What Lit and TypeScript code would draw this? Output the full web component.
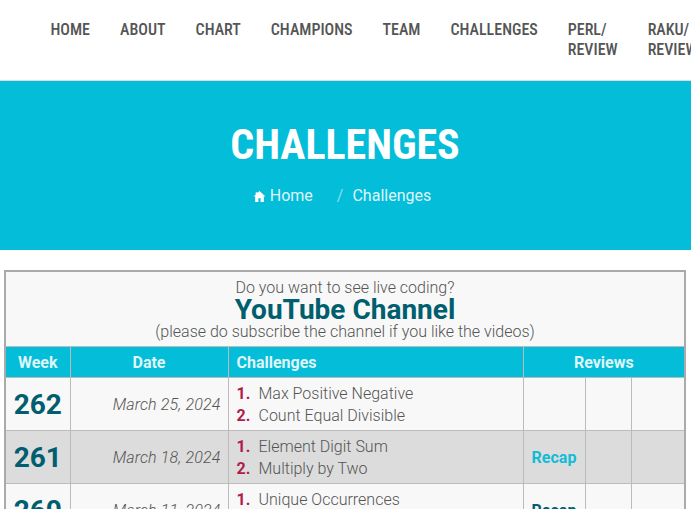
import { LitElement, html, css } from "lit";
import { customElement } from "lit/decorators.js";

const rows = [
  { week: "262", date: "March 25, 2024", a: "Max Positive Negative", b: "Count Equal Divisible", recap: "", alt: false },
  { week: "261", date: "March 18, 2024", a: "Element Digit Sum", b: "Multiply by Two", recap: "Recap", alt: true },
  { week: "260", date: "March 11, 2024", a: "Unique Occurrences", b: "Dictionary Rank", recap: "Recap", alt: false },
];

@customElement("app-root")
export class AppRoot extends LitElement {
  static styles = css`
    :host { display: block; width: 691px; height: 509px; overflow: hidden; font-family: Roboto, sans-serif; background: #fff; color: #555; }
    .nav { display: flex; gap: 30px; padding: 20px 0 0 50.5px; height: 60px; width: 800px; box-sizing: content-box; }
    .nav a { font-size: 16px; line-height: 20px; font-weight: 500; color: #555; font-stretch: 87%; }
    .hero { border-top: 1px solid #ddd; height: 169px; background: #04bdd8; color: #fff; display: flex; flex-direction: column; align-items: center; }
    h1 { margin: 42px 0 0 -1px; font-size: 42px; line-height: 44px; font-weight: 700; font-stretch: 87%; }
    .crumbs { display: flex; align-items: center; margin-top: 17px; padding-right: 7px; font-size: 16px; font-weight: 400; line-height: 24px; color: #dff6fa; }
    .crumbs svg { width: 13px; height: 13px; margin-right: 4px; color: #fff; }
    .sep { margin: 0 9px 0 24px; opacity: .6; }
    .wrap { padding: 20px 5px 0 4px; }
    table { border-collapse: collapse; width: 682px; table-layout: fixed; border: 2px solid #aaa; background: #f8f8f8; }
    td, th { border: 1px solid #bbb; padding: 0; }
    .promo { text-align: center; font-size: 16px; line-height: 16px; color: #555; font-weight: 300; height: 72px; padding-top: 2px; }
    .promo b { display: block; font-size: 28px; line-height: 28px; color: #005e6e; font-weight: 700; }
    .promo span { display: block; }
    .head th { background: #04bdd8; color: #def5f9; font-size: 16px; font-weight: 700; height: 30px; }
    .head .left { text-align: left; padding-left: 8px; }
    .row td { height: 52px; }
    .row .ch { height: 50px; padding: 2px 0 0 8px; font-size: 16px; line-height: 22px; font-weight: 300; }
    .alt td { background: #dcdcdc; }
    .week { text-align: center; font-size: 28px; font-weight: 700; color: #005e6e; }
    .date { text-align: right; padding-right: 7px; font-size: 16px; font-style: italic; font-weight: 300; color: #555; letter-spacing: .15px; }
    .ch i { font-style: normal; font-weight: 700; color: #b01c4b; display: inline-block; width: 22px; }
    .recap { text-align: center; font-size: 16px; font-weight: 700; color: #12bcd8; }
    .dark { color: #005e6e; }
  `;

  render() {
    return html`
      <div class="nav">
        <a>HOME</a><a>ABOUT</a><a>CHART</a><a>CHAMPIONS</a><a>TEAM</a><a>CHALLENGES</a><a>PERL/<br />REVIEW</a><a>RAKU/<br />REVIEW</a>
      </div>
      <div class="hero">
        <h1>CHALLENGES</h1>
        <div class="crumbs">
          <svg viewBox="0 0 24 24" fill="currentColor"><path d="M12 2 23 12h-3v10h-6v-7h-4v7H4V12H1l4-3.6V4h3v1.7z" /></svg>
          <span>Home</span><span class="sep">/</span><span>Challenges</span>
        </div>
      </div>
      <div class="wrap">
        <table>
          <colgroup>
            <col style="width:65px" /><col style="width:158px" /><col style="width:295px" /><col style="width:62px" /><col style="width:46px" /><col style="width:54px" />
          </colgroup>
          <tr>
            <td class="promo" colspan="6">
              <span>Do you want to see live coding?</span>
              <b>YouTube Channel</b>
              <span>(please do subscribe the channel if you like the videos)</span>
            </td>
          </tr>
          <tr class="head">
            <th>Week</th><th>Date</th><th class="left">Challenges</th><th colspan="3">Reviews</th>
          </tr>
          ${rows.map(
            (r, i) => html`
              <tr class="row ${r.alt ? "alt" : ""}">
                <td class="week">${r.week}</td>
                <td class="date">${r.date}</td>
                <td class="ch"><div><i>1.</i>${r.a}</div><div><i>2.</i>${r.b}</div></td>
                <td class="recap ${i === 2 ? "dark" : ""}">${r.recap}</td>
                <td></td>
                <td></td>
              </tr>
            `
          )}
        </table>
      </div>
    `;
  }
}
